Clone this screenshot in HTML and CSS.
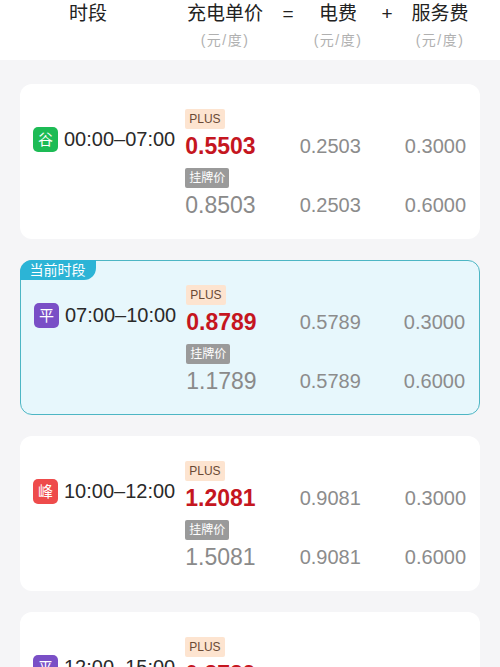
FILE: index.html
```html
<!DOCTYPE html>
<html lang="zh-CN">
<head>
  <meta charset="UTF-8">
  <meta name="viewport" content="width=device-width, initial-scale=1.0">
  <title>充电价格时段</title>
  <link rel="stylesheet" href="styles.css">
</head>
<body>
  <!-- 表头 -->
  <div class="header">
    <div class="head-row">
      <span class="h-period">时段</span>
      <span class="h-price">充电单价</span>
      <span class="h-op1">=</span>
      <span class="h-elec">电费</span>
      <span class="h-op2">+</span>
      <span class="h-service">服务费</span>
    </div>
    <div class="head-row sub">
      <span class="h-period"></span>
      <span class="h-price">(元/度)</span>
      <span class="h-op1"></span>
      <span class="h-elec">(元/度)</span>
      <span class="h-op2"></span>
      <span class="h-service">(元/度)</span>
    </div>
  </div>

  <div class="list">
    <!-- 谷 -->
    <div class="card">
      <div class="left">
        <div class="period">
          <span class="badge green">谷</span>
          <span class="time">00:00–07:00</span>
        </div>
        <div class="price-col">
          <div class="row">
            <span class="tag plus">PLUS</span>
            <div class="price red">0.5503</div>
          </div>
          <div class="row">
            <span class="tag list-tag">挂牌价</span>
            <div class="price gray">0.8503</div>
          </div>
        </div>
      </div>
      <div class="val-col">
        <div class="val">0.2503</div>
        <div class="val">0.2503</div>
      </div>
      <div class="val-col">
        <div class="val">0.3000</div>
        <div class="val">0.6000</div>
      </div>
    </div>

    <!-- 平（当前） -->
    <div class="card current">
      <span class="current-tab">当前时段</span>
      <div class="left">
        <div class="period">
          <span class="badge purple">平</span>
          <span class="time">07:00–10:00</span>
        </div>
        <div class="price-col">
          <div class="row">
            <span class="tag plus">PLUS</span>
            <div class="price red">0.8789</div>
          </div>
          <div class="row">
            <span class="tag list-tag">挂牌价</span>
            <div class="price gray">1.1789</div>
          </div>
        </div>
      </div>
      <div class="val-col">
        <div class="val">0.5789</div>
        <div class="val">0.5789</div>
      </div>
      <div class="val-col">
        <div class="val">0.3000</div>
        <div class="val">0.6000</div>
      </div>
    </div>

    <!-- 峰 -->
    <div class="card">
      <div class="left">
        <div class="period">
          <span class="badge red-bg">峰</span>
          <span class="time">10:00–12:00</span>
        </div>
        <div class="price-col">
          <div class="row">
            <span class="tag plus">PLUS</span>
            <div class="price red">1.2081</div>
          </div>
          <div class="row">
            <span class="tag list-tag">挂牌价</span>
            <div class="price gray">1.5081</div>
          </div>
        </div>
      </div>
      <div class="val-col">
        <div class="val">0.9081</div>
        <div class="val">0.9081</div>
      </div>
      <div class="val-col">
        <div class="val">0.3000</div>
        <div class="val">0.6000</div>
      </div>
    </div>

    <!-- 平 -->
    <div class="card">
      <div class="left">
        <div class="period">
          <span class="badge purple">平</span>
          <span class="time">12:00–15:00</span>
        </div>
        <div class="price-col">
          <div class="row">
            <span class="tag plus">PLUS</span>
            <div class="price red">0.8789</div>
          </div>
          <div class="row">
            <span class="tag list-tag">挂牌价</span>
            <div class="price gray">1.1789</div>
          </div>
        </div>
      </div>
      <div class="val-col">
        <div class="val">0.5789</div>
        <div class="val">0.5789</div>
      </div>
      <div class="val-col">
        <div class="val">0.3000</div>
        <div class="val">0.6000</div>
      </div>
    </div>
  </div>
</body>
</html>
```

FILE: styles.css
```css
/* 基础 */
html {
  background-color: #f5f5f7;
}
body {
  margin: 0;
  overflow: hidden;
  font-family: "Liberation Sans", "Noto Sans CJK SC", sans-serif;
  color: #333;
}

/* 表头 */
.header {
  background-color: #fff;
  height: 60px;
  box-sizing: border-box;
}
.head-row {
  display: flex;
  font-size: 19px;
  line-height: 28px;
  color: #222;
}
.head-row span {
  text-align: center;
}
.head-row.sub {
  margin-top: 2px;
  font-size: 14px;
  line-height: 20px;
  color: #b0b0b0;
  letter-spacing: 1.5px;
}
.h-period { width: 176px; }
.h-price { width: 98px; }
.h-op1 { width: 28px; }
.h-elec { width: 72px; }
.h-op2 { width: 26px; }
.h-service { width: 80px; }

/* 列表 */
.list {
  display: flex;
  flex-direction: column;
  gap: 21px;
  padding: 24px 20px;
}
.card {
  position: relative;
  display: flex;
  justify-content: space-between;
  align-items: flex-start;
  height: 155px;
  box-sizing: border-box;
  padding: 25px 14px 20px 13px;
  background-color: #fff;
  border-radius: 12px;
}
.card.current {
  background-color: #e7f7fc;
  border: 1.5px solid #4db6c4;
  padding-top: 23.5px;
}
.current-tab {
  position: absolute;
  top: -1.5px;
  left: -1.5px;
  height: 20px;
  padding: 0 10px;
  line-height: 20px;
  font-size: 14px;
  color: #fff;
  background-color: #2cb4d6;
  border-radius: 12px 0 12px 0;
}

.left {
  display: flex;
  align-items: flex-start;
  gap: 10px;
}
.period {
  display: flex;
  align-items: center;
  gap: 6px;
  margin-top: 18px;
}
.badge {
  width: 25px;
  height: 25px;
  border-radius: 5px;
  color: #fff;
  font-size: 15px;
  line-height: 25px;
  text-align: center;
}
.green { background-color: #1dbb55; }
.purple { background-color: #7a4fc6; }
.red-bg { background-color: #ee4b4b; }
.time {
  font-size: 20px;
  color: #2a2a2a;
}

.price-col,
.val-col {
  display: flex;
  flex-direction: column;
  gap: 8px;
}
.row {
  display: flex;
  flex-direction: column;
  align-items: flex-start;
}
.tag {
  height: 20px;
  line-height: 20px;
  padding: 0 4px;
  font-size: 12px;
  border-radius: 2px;
}
.tag.plus {
  background-color: #fde4d0;
  color: #6a4a35;
  padding: 0 4px;
}
.tag.list-tag {
  background-color: #9a9a9a;
  color: #fff;
}
.price {
  margin-top: 3px;
  font-size: 23px;
  line-height: 28px;
}
.price.red {
  color: #c5161f;
  font-weight: bold;
}
.price.gray {
  color: #8a8a8a;
}
.val {
  padding-top: 23px;
  font-size: 20px;
  line-height: 28px;
  color: #8c8c8c;
}
```
